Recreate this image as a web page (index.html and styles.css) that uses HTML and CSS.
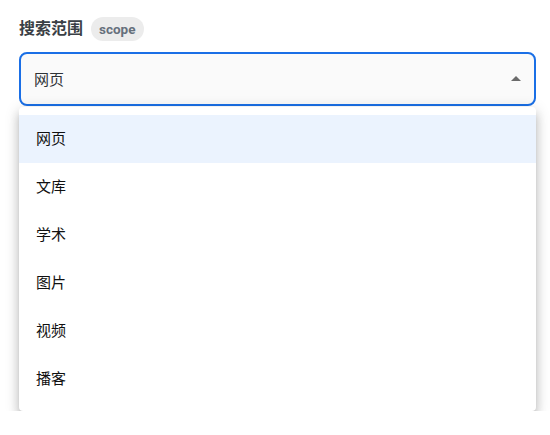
FILE: index.html
```html
<!DOCTYPE html>
<html lang="zh">
<head>
<meta charset="utf-8">
<link rel="stylesheet" href="styles.css">
</head>
<body>
<div class="field">
  <div class="label-row">
    <span class="label">搜索范围</span>
    <span class="badge">scope</span>
  </div>
  <div class="select">
    <span class="value">网页</span>
    <svg class="arrow" width="10" height="5" viewBox="0 0 10 5"><path d="M0 5 L5 0 L10 5 Z" fill="#6b6b6b"/></svg>
  </div>
  <div class="options">
    <div class="item active">网页</div>
    <div class="item">文库</div>
    <div class="item">学术</div>
    <div class="item">图片</div>
    <div class="item">视频</div>
    <div class="item">播客</div>
  </div>
</div>
</body>
</html>
```
FILE: styles.css
```css
html, body {
  margin: 0;
  padding: 0;
  background: #ffffff;
  font-family: Roboto, "Noto Sans CJK SC", "Noto Sans", sans-serif;
}
.field {
  padding: 17px 14px 0 19px;
  width: 517px;
}
.label-row {
  display: flex;
  align-items: center;
  gap: 8px;
  height: 24px;
}
.label {
  font-size: 16px;
  font-weight: 600;
  color: #3a3f45;
  line-height: 24px;
}
.badge {
  display: inline-flex;
  align-items: center;
  height: 24px;
  padding: 0 8px;
  border-radius: 12px;
  background: #ececec;
  color: #66707c;
  font-size: 13.5px;
  font-weight: 700;
}
.select {
  box-sizing: border-box;
  margin-top: 11px;
  height: 54px;
  border: 2px solid #1a6fe6;
  border-radius: 8px;
  background: #fafafa;
  display: flex;
  align-items: center;
  justify-content: space-between;
  padding: 0 13px 2px 13px;
}
.value {
  font-size: 15px;
  color: #2f3337;
}
.arrow {
  display: block;
  margin-top: 1px;
}
.options {
  margin-top: 1px;
  padding: 8px 0;
  background: #ffffff;
  border-radius: 4px;
  box-shadow: 0 5px 5px -3px rgba(0,0,0,0.2), 0 8px 10px 1px rgba(0,0,0,0.14), 0 3px 14px 2px rgba(0,0,0,0.12);
}
.item {
  box-sizing: border-box;
  height: 48px;
  display: flex;
  align-items: center;
  padding: 0 0 3px 17px;
  font-size: 15px;
  color: #111111;
}
.item.active {
  background: #ebf3fe;
}
```
